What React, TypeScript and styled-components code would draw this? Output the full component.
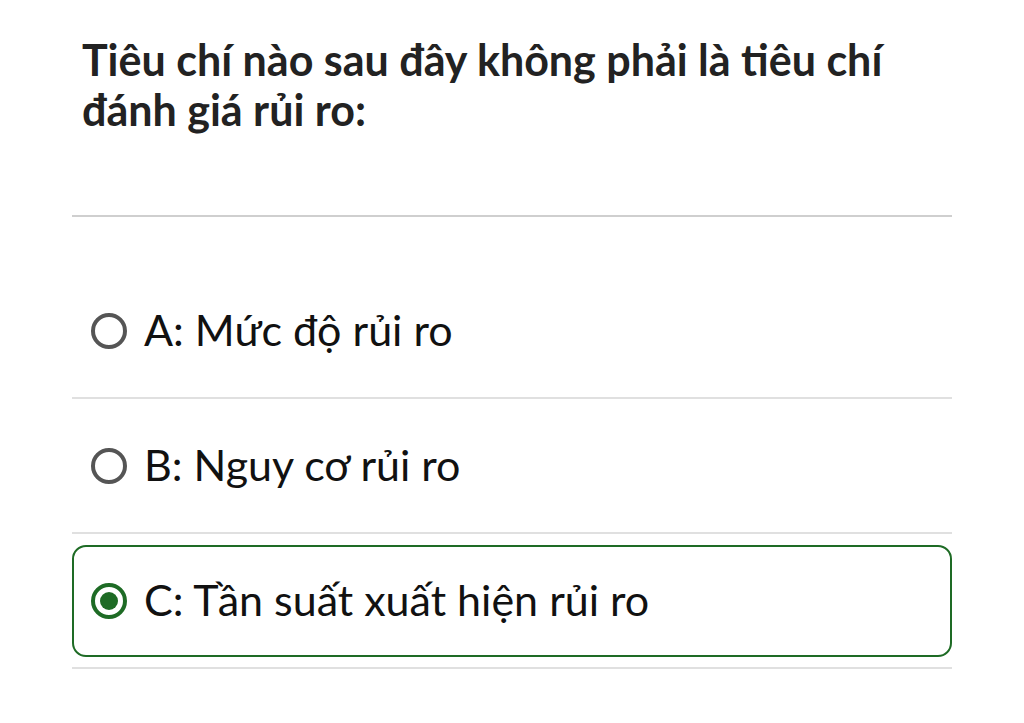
import styled, { createGlobalStyle } from "styled-components";

const GlobalStyle = createGlobalStyle`
    html, body {
        margin: 0;
        padding: 0;
        background: #ffffff;
    }
    body {
        font-family: Lato, "Noto Sans", sans-serif;
    }
`;

const Container = styled.div`
    width: 1024px;
    height: 723px;
    box-sizing: border-box;
    padding: 0 72px 0 72px;
    overflow: hidden;
`;

const Question = styled.h1`
    margin: 0;
    padding: 35px 50px 0 10px;
    height: 217px;
    box-sizing: border-box;
    font-size: 43px;
    line-height: 50px;
    font-weight: 700;
    color: #222222;
    border-bottom: 2px solid #cfcfcf;
`;

const OptionList = styled.ul`
    list-style: none;
    margin: 0;
    padding: 47px 0 0 0;
`;

const Option = styled.li`
    padding: 11px 0 10px 0;
    border-bottom: 2px solid #e0e0e0;
`;

const OptionBox = styled.label<{ $selected: boolean }>`
    height: 112px;
    box-sizing: border-box;
    display: flex;
    align-items: center;
    gap: 17px;
    padding: 0 17px;
    border: 2px solid ${props => props.$selected ? "#1e6b25" : "transparent"};
    border-radius: 14px;
    font-size: 43px;
    color: #111111;
`;

const Radio = styled.span<{ $selected: boolean }>`
    width: 36px;
    height: 36px;
    box-sizing: border-box;
    border-radius: 50%;
    border: ${props => props.$selected ? "4.5px solid #1e6b25" : "4px solid #555555"};
    display: flex;
    align-items: center;
    justify-content: center;
    flex-shrink: 0;
    &::after {
        content: "";
        display: ${props => props.$selected ? "block" : "none"};
        width: 18px;
        height: 18px;
        border-radius: 50%;
        background: #1e6b25;
    }
`;

const OptionText = styled.span`
    line-height: 1;
    margin-top: -4px;
`;

const options = [
    { id: "A", text: "A: Mức độ rủi ro" },
    { id: "B", text: "B: Nguy cơ rủi ro" },
    { id: "C", text: "C: Tần suất xuất hiện rủi ro" },
];

function App() {
    const selected = "C";

    return (
        <Container>
            <GlobalStyle />
            <Question>Tiêu chí nào sau đây không phải là tiêu chí đánh giá rủi ro:</Question>
            <OptionList>
                {options.map(o => (
                    <Option key={o.id}>
                        <OptionBox $selected={o.id === selected}>
                            <Radio $selected={o.id === selected} />
                            <OptionText>{o.text}</OptionText>
                        </OptionBox>
                    </Option>
                ))}
            </OptionList>
        </Container>
    );
}

export default App;
